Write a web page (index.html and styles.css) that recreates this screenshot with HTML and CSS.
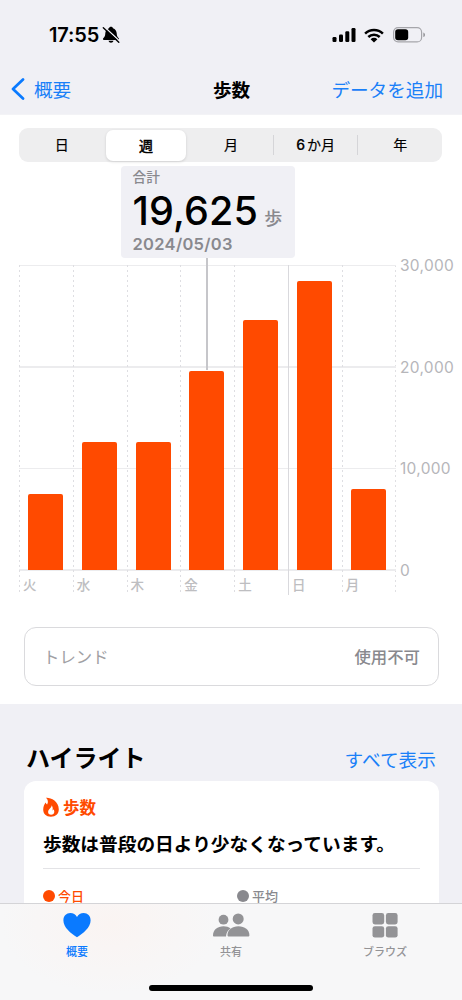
FILE: index.html
```
<!DOCTYPE html>
<html lang="ja">
<head>
<meta charset="utf-8">
<meta name="viewport" content="width=device-width, initial-scale=1">
<title>歩数</title>
<link rel="stylesheet" href="styles.css">
</head>
<body>
<div class="screen">
  <header class="header">
    <div class="status">
      <div class="status-left">
        <span class="clock">17:55</span>
        <svg class="bell" viewBox="0 0 18 18"><path d="M9 .8c1 0 1.800.6 2 1.400 2.300.8 3.600 2.700 3.700 5.100.1 2.900.7 3.500 2 4.900.7.8.3 1.700-.7 1.700H2c-1 0-1.400-.9-.7-1.700 1.300-1.400 1.900-2 2-4.900.1-2.400 1.400-4.300 3.700-5.100C7.200 1.400 8 .8 9 .8zM6.500 14.800h5c-.3 1.300-1.300 2-2.500 2s-2.200-.7-2.500-2z"/><path d="M2.300.8 17.800 15.200" stroke="#f0f0f5" stroke-width="1.300"/><path d="M1.300 1.800 16.800 16.300" stroke="#000" stroke-width="1.400" stroke-linecap="round"/></svg>
      </div>
      <div class="status-right">
        <svg class="signal" viewBox="0 0 24 16"><rect x="0.500" y="10" width="4" height="5" rx="1.200"/><rect x="7" y="7.500" width="4" height="7.500" rx="1.200"/><rect x="13.300" y="4.300" width="4" height="10.700" rx="1.200"/><rect x="19.500" y="1" width="4" height="14" rx="1.200"/></svg>
        <svg class="wifi" viewBox="0 0 20 15"><g fill="none" stroke="#000" stroke-width="2.500"><path d="M1.100 5.600a12.800 12.800 0 0 1 17.800 0"/><path d="M4.300 9a8.200 8.200 0 0 1 11.400 0"/></g><path d="M10 14.500 6.600 11.200a4.900 4.900 0 0 1 6.800 0z"/></svg>
        <svg class="battery" viewBox="0 0 32 16"><rect x=".6" y=".6" width="28" height="14.300" rx="4.500" fill="none" stroke="#a5a5aa" stroke-width="1.200"/><rect x="2.200" y="2.300" width="13" height="11" rx="2.800"/><path d="M30.300 5.500c1.300.4 1.700 1.300 1.700 2.300s-.4 1.900-1.700 2.300z" fill="#98989d"/></svg>
      </div>
    </div>
    <nav class="nav">
      <a class="back"><svg class="chevron" viewBox="0 0 14 22"><path d="M12 1.500 2 11l10 9.500" fill="none" stroke="#0a7aff" stroke-width="2.700" stroke-linecap="round" stroke-linejoin="round"/></svg><span>概要</span></a>
      <h1 class="title">歩数</h1>
      <a class="add">データを追加</a>
    </nav>
  </header>

  <main class="content">
    <section class="panel">
      <div class="segments">
        <span class="segment">日</span>
        <span class="segment selected">週</span>
        <span class="segment">月</span>
        <span class="segment divided"><b>6</b>か月</span>
        <span class="segment divided">年</span>
      </div>
      <div class="callout">
        <div class="callout-label">合計</div>
        <div class="callout-value"><span class="number">19,625</span><span class="unit">歩</span></div>
        <div class="callout-date">2024/05/03</div>
      </div>
      <div class="chart">
        <div class="plot">
          <div class="day"><div class="track"><i class="bar" style="height:76px"></i></div><span>火</span></div>
          <div class="day"><div class="track"><i class="bar" style="height:128.500px"></i></div><span>水</span></div>
          <div class="day"><div class="track"><i class="bar" style="height:128px"></i></div><span>木</span></div>
          <div class="day picked"><div class="track"><i class="bar" style="height:199px"></i></div><span>金</span></div>
          <div class="day"><div class="track"><i class="bar" style="height:250.500px"></i></div><span>土</span></div>
          <div class="day week-start"><div class="track"><i class="bar" style="height:289.500px"></i></div><span>日</span></div>
          <div class="day"><div class="track"><i class="bar" style="height:81px"></i></div><span>月</span></div>
        </div>
        <div class="axis"><span>30,000</span><span>20,000</span><span>10,000</span><span>0</span></div>
      </div>
      <div class="trend"><span class="trend-name">トレンド</span><span class="trend-state">使用不可</span></div>
    </section>

    <section class="highlights">
      <div class="section-head"><h2>ハイライト</h2><a>すべて表示</a></div>
      <article class="card">
        <div class="card-kind"><svg class="flame" viewBox="0 0 16 20"><path fill-rule="evenodd" d="M3 .7C7.500.3 15.800 4 15.800 12.300c0 4.700-3.200 7.400-7.900 7.400S.2 16.900.2 12.500c0-3.300 1.400-5.200 2.500-6.900.3.900.7 1.500 1.400 1.900C5.500 5.400 5.100 2.500 3 .7zM8.600 8.200c.2 2.700-3.500 3.800-3.500 6.700 0 1.700 1.200 2.800 3 2.800s3.200-1.100 3.200-3c0-1-.4-1.800-.8-2.400-.2.700-.5 1.100-1 1.300.5-2.100.3-4-.9-5.400z"/></svg><span>歩数</span></div>
        <p class="card-text">歩数は普段の日より少なくなっています。</p>
        <div class="legend"><span class="today"><i class="dot"></i>今日</span><span class="average"><i class="dot"></i>平均</span></div>
      </article>
    </section>
  </main>

  <footer class="tabbar">
    <div class="tabs">
      <a class="tab active"><svg viewBox="0 0 40 28"><path d="M20 26.300C14 22.400 6.400 16.400 6.400 9.400c0-4.300 3-7.300 6.900-7.300 3 0 5.300 1.500 6.700 4 1.400-2.500 3.700-4 6.700-4 3.900 0 6.900 3 6.900 7.300 0 7-7.600 13-13.600 16.900z"/></svg><span>概要</span></a>
      <a class="tab"><svg viewBox="0 0 40 28"><circle cx="12.500" cy="8.700" r="4.900"/><path d="M2 24.500c0-5.600 4.500-9.200 10.500-9.200 2.900 0 5.200.8 7 2.200-2.700 1.900-4.300 4.400-4.500 8H3.200c-.8 0-1.200-.3-1.200-1z"/><circle cx="27.200" cy="7.900" r="5.500"/><path d="M16.500 24.200c0-5.100 4.500-8.900 10.900-8.900s11 3.800 11 8.900c0 .9-.5 1.300-1.400 1.300H17.900c-.9 0-1.400-.4-1.400-1.300z"/></svg><span>共有</span></a>
      <a class="tab"><svg viewBox="0 0 40 28"><rect x="7.500" y="2" width="11.700" height="11.400" rx="2.400"/><rect x="20.900" y="2" width="11.700" height="11.400" rx="2.400"/><rect x="7.500" y="15.200" width="11.700" height="11.400" rx="2.400"/><rect x="20.900" y="15.200" width="11.700" height="11.400" rx="2.400"/></svg><span>ブラウズ</span></a>
    </div>
    <div class="home-indicator"></div>
  </footer>
</div>
</body>
</html>
```
FILE: styles.css
```
* { box-sizing: border-box; }
body { margin: 0; font-family: Inter, "Noto Sans CJK JP", sans-serif; color: #000; }
h1, h2, p { margin: 0; }
svg { display: block; flex: none; }
.screen { width: 462px; height: 1000px; overflow: hidden; display: flex; flex-direction: column; background: #f0f0f5; }
.header { height: 115px; flex: none; background: #f0f0f5; border-bottom: 1px solid #f3f3f6; }
.status { height: 64px; padding: 24px 37px 0 49px; display: flex; justify-content: space-between; }
.status-left, .status-right { display: flex; height: 22px; align-items: center; }
.clock { font-size: 20px; font-weight: 600; letter-spacing: -.15px; line-height: 22px; }
.bell { width: 18px; height: 18px; margin-left: 3px; }
.signal { width: 24px; height: 16px; }
.wifi { width: 20px; height: 15px; margin-left: 8px; }
.battery { width: 32px; height: 16px; margin-left: 9px; }
.nav { height: 50px; padding: 0 19px 2px 11px; display: grid; grid-template-columns: 1fr auto 1fr; align-items: center; font-size: 18.600px; }
.back, .add { color: #1a80f8; }
.back { display: flex; align-items: center; gap: 9px; }
.chevron { width: 14px; height: 22px; margin-top: 2px; }
.title { font-size: 18.600px; font-weight: 600; transform: translateX(4.500px); }
.add { text-align: right; }
.content { flex: 1; min-height: 0; overflow: hidden; }
.panel { height: 589px; padding-top: 13px; background: #fff; }
.segments { margin: 0 20px 0 19px; height: 34px; border-radius: 9px; background: #eeeeef; display: grid; grid-template-columns: repeat(5, 1fr); align-items: center; font-size: 14px; text-align: center; -webkit-text-stroke: .2px #000; }
.segment { line-height: 20px; border-left: 1px solid transparent; }
.segment b { font-weight: 500; margin-right: 2px; }
.divided { border-color: #d5d5d8; }
.selected { height: 31px; line-height: 31px; margin: 0 2.500px; border: 0; border-radius: 7px; background: #fff; box-shadow: 0 1px 3px #0002; -webkit-text-stroke-width: .5px; }
.callout { width: 174px; height: 92px; margin: 4px 0 0 120.500px; padding: 1px 0 0 12px; border-radius: 4px; background: #f0f0f5; color: #89898e; }
.callout-label { font-size: 13.700px; line-height: 20px; font-weight: 500; }
.callout-value { display: flex; align-items: baseline; gap: 6px; height: 47px; line-height: 48px; }
.number { font-size: 39.500px; font-weight: 500; letter-spacing: .15px; color: #000; }
.unit { font-size: 18px; font-weight: 500; }
.callout-date { font-size: 16.500px; line-height: 21px; font-weight: 600; letter-spacing: .3px; }
.chart { display: flex; margin: 7px 0 0 19px; height: 330px; }
.plot { width: 376.500px; display: grid; grid-template-columns: repeat(7, 1fr); background: repeating-linear-gradient(to bottom, #ececee 0 1px, transparent 1px 101.500px) 0 0 / 100% 306px no-repeat, repeating-linear-gradient(to bottom, #e0e0e3 0 2px, transparent 2px 5px) 100% 0 / 1px 100% no-repeat; }
.day { height: 330px; position: relative; background: repeating-linear-gradient(to bottom, #dedee2 0 2px, transparent 2px 5px) 0 0 / 1px 100% no-repeat; }
.week-start { background: linear-gradient(#d9d9dd, #d9d9dd) 0 0 / 1px 100% no-repeat; }
.track { height: 305px; padding-left: 9px; display: flex; align-items: flex-end; }
.bar { width: 35px; border-radius: 2px 2px 0 0; background: #ff4a00; }
.day span { display: block; padding-left: 4px; font-size: 13.500px; line-height: 30px; color: #bebec1; font-weight: 500; }
.picked::before { content: ""; position: absolute; left: 26px; top: -7px; width: 2px; height: 112px; background: #c6c6ca; }
.axis { margin: -9px 0 0 4.500px; display: flex; flex-direction: column; gap: 81.500px; font-size: 15.500px; letter-spacing: .3px; line-height: 20px; color: #b6b6ba; }
.trend { margin: 32px 23px 0 24px; height: 59px; padding: 0 18px 2px; border: 1.500px solid #dadadd; border-radius: 12px; display: flex; align-items: center; justify-content: space-between; font-size: 16.400px; }
.trend-name { color: #a0a0a4; }
.trend-state { color: #89898e; font-weight: 500; }
.highlights { background: #f0f0f5; }
.section-head { height: 77px; padding: 37px 26px 0 26px; display: flex; justify-content: space-between; align-items: baseline; line-height: 36px; }
.section-head h2 { font-size: 24px; font-weight: 600; }
.section-head a { font-size: 18.700px; color: #1a80f8; }
.card { margin: 0 23px 0 24px; padding: 14px 19px; height: 150px; border-radius: 12px; background: #fff; }
.card-kind { display: flex; align-items: center; gap: 4px; height: 24px; color: #ff4a00; font-size: 16.500px; font-weight: 600; }
.flame { width: 16px; height: 20px; fill: #ff4a00; }
.card-text { margin-top: 11px; height: 39px; line-height: 30px; border-bottom: 1px solid #e3e3e6; font-size: 18.700px; font-weight: 600; white-space: nowrap; }
.legend { margin-top: 17px; display: grid; grid-template-columns: 194px 1fr; font-size: 13px; line-height: 20px; font-weight: 500; }
.legend span { display: flex; align-items: center; gap: 3px; }
.dot { width: 12px; height: 12px; border-radius: 50%; background: currentColor; }
.today { color: #ff4a00; }
.average { color: #89898e; }
.tabbar { flex: none; height: 97px; border-top: 1px solid #d4d4d7; background: radial-gradient(ellipse 110px 70px at 110px 20px, #faf4f2, transparent), #f7f7f8; }
.tabs { height: 82px; padding-top: 7px; display: grid; grid-template-columns: repeat(3, 154px); }
.tab { display: flex; flex-direction: column; align-items: center; color: #939396; fill: #939396; font-size: 11px; line-height: 16px; font-weight: 500; }
.tab svg { width: 40px; height: 28px; margin-bottom: 5px; }
.active { color: #0a7aff; fill: #0a7aff; }
.home-indicator { width: 164px; height: 6px; margin: -1px auto 0; border-radius: 3px; background: #000; }
```
